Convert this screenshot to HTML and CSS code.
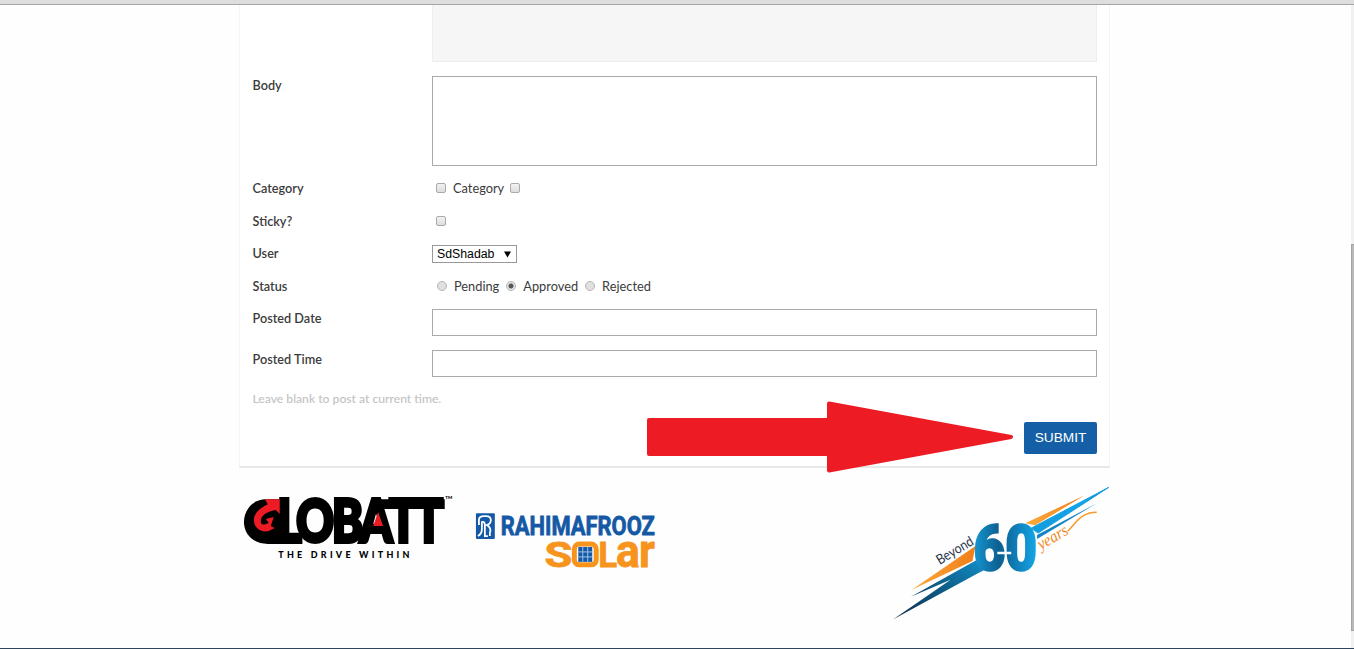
FILE: index.html
```html
<!DOCTYPE html>
<html lang="en">
<head>
<meta charset="utf-8">
<title>Post</title>
<link rel="stylesheet" href="styles.css">
</head>
<body>
<div class="topbar"></div>
<main class="page">
  <form class="card">
    <div class="row row-preview"><span></span><div class="preview"></div></div>
    <div class="row row-body"><label class="label">Body</label><textarea class="area"></textarea></div>
    <div class="row row-category"><span class="label">Category</span>
      <div class="options"><i class="check"></i><span class="opt">Category</span><i class="check last"></i></div></div>
    <div class="row row-sticky"><span class="label">Sticky?</span><div class="options"><i class="check"></i></div></div>
    <div class="row row-user"><span class="label">User</span><div class="select"><span>SdShadab</span>
      <svg width="7" height="7" viewBox="0 0 7 7"><path d="M0 .5h7L3.500 6.500z"/></svg></div></div>
    <div class="row row-status"><span class="label">Status</span>
      <div class="options"><i class="radio"></i><span class="opt pending">Pending</span><i class="radio on"></i><span class="opt approved">Approved</span><i class="radio"></i><span class="opt">Rejected</span></div></div>
    <div class="row row-input"><label class="label">Posted Date</label><input class="field"></div>
    <div class="row row-input"><label class="label">Posted Time</label><input class="field"></div>
    <div class="hint">Leave blank to post at current time.</div>
    <div class="actions"><button type="button" class="submit">SUBMIT</button></div>
    <svg class="arrow" width="368" height="74" viewBox="0 0 368 74"><path d="M3 20H183V3.500L365 37 183 70.500V54H3z" fill="#ed1c24" stroke="#ed1c24" stroke-width="4" stroke-linejoin="round"/></svg>
  </form>
  <footer class="logos">
    <svg class="globatt" width="225" height="85" viewBox="0 0 225 85">
      <text class="heavy" transform="scale(.8 1)" x="53 77 122 157 194 226" y="57.500" font-size="58.500" stroke="#000" stroke-width="4">LOBATT</text>
      <path d="M31 14h16v45H33C18 59 9 49 9 37S18 14 31 14z"/>
      <path d="M30 14h15v15l-4-4C31 27 26 31 26 36q0 5 5 3l3-1-3-4 8-2-3 9 4 2-6 3c-8 2-15-3-15-11 0-7 6-12 14-16z" fill="#ed1c24"/>
      <path d="M144 27l5 14h-10z" fill="#ed1c24"/>
      <path d="M137 14h74v10h-74z"/>
      <text class="bold" x="43.500" y="73.500" font-size="9" textLength="132">THE DRIVE WITHIN</text>
      <text class="bold" x="211.500" y="13.500" font-size="4.500">TM</text>
    </svg>
    <svg class="solar" width="200" height="70" viewBox="0 0 200 70">
      <rect x="11" y="8" width="19" height="26" rx="1" fill="#1559a6"/>
      <path d="M14 20v-5q0-4 5-4h2q5 0 5 4 0 4-4 5 5 3 3 8v3M13 31q4-2 4-7v-7q3-1 3 3v11h3" fill="none" stroke="#fff" stroke-width="1.800"/>
      <text class="square" x="36" y="30" font-size="26" textLength="155" lengthAdjust="spacingAndGlyphs" fill="#1559a6" stroke="#1559a6">RAHIMAFROOZ</text>
      <g class="square" fill="#f7941e" stroke="#f7941e">
        <text x="80" y="62" font-size="36" textLength="28" lengthAdjust="spacingAndGlyphs">S</text>
        <text x="134" y="62" font-size="36" textLength="19" lengthAdjust="spacingAndGlyphs">L</text>
        <text x="152" y="62" font-size="47" textLength="24" lengthAdjust="spacingAndGlyphs">a</text>
        <text x="175" y="62" font-size="47" textLength="16" lengthAdjust="spacingAndGlyphs">r</text>
      </g>
      <rect x="110" y="39" width="22" height="21" rx="5" fill="#fff" stroke="#f7941e" stroke-width="5"/>
      <rect x="114" y="42" width="14" height="15" fill="#1559a6"/>
      <path d="M118.500 42v15M123.500 42v15M114 47h14M114 52h14" stroke="#9cc4ea" stroke-width="1"/>
    </svg>
    <svg class="sixty" width="235" height="145" viewBox="0 0 235 145">
      <defs>
        <linearGradient id="tail" x1="0" y1="1" x2="1" y2="0"><stop offset="0" stop-color="#10294d"/><stop offset=".5" stop-color="#0d5c86"/><stop offset="1" stop-color="#1394cf"/></linearGradient>
        <linearGradient id="beam"><stop offset="0" stop-color="#139bdc"/><stop offset=".7" stop-color="#13a5ea"/><stop offset="1" stop-color="#1f4b80"/></linearGradient>
        <linearGradient id="digits"><stop offset="0" stop-color="#1598d3"/><stop offset=".4" stop-color="#0e5f90"/><stop offset=".55" stop-color="#0e6fa4"/><stop offset="1" stop-color="#14a7e9"/></linearGradient>
        <linearGradient id="gold"><stop offset="0" stop-color="#fbaa3c"/><stop offset="1" stop-color="#f07f18"/></linearGradient>
      </defs>
      <path d="M27 110L91 66 88 81z" fill="url(#gold)"/>
      <path d="M26 117L94 79 108 86 94 93 8 140 66 100z" fill="url(#tail)"/>
      <path d="M141 43L201 15 151 45z" fill="url(#gold)"/>
      <path d="M147 48L225 7 154 53z" fill="url(#beam)" stroke="#13a0e2" stroke-width="1"/>
      <path d="M153 55L213 23 153 59z" fill="#1584c5"/>
      <text class="digits" x="89" y="90" font-size="63" textLength="64" lengthAdjust="spacingAndGlyphs" fill="url(#digits)" stroke="url(#digits)" stroke-width="2.500">60</text>
      <path d="M113 73h14" stroke="#fff" stroke-width="2.500"/>
      <text class="beyond" transform="translate(55 85) rotate(-31)" font-size="14" textLength="41" lengthAdjust="spacingAndGlyphs">Beyond</text>
      <text class="years" transform="translate(157 70) rotate(-30)" font-size="17" textLength="33" lengthAdjust="spacingAndGlyphs">years</text>
      <path d="M184 51C192 43 197 32 213 32" fill="none" stroke="#f59a2c" stroke-width="1.500"/>
    </svg>
  </footer>
</main>
<div class="scrollbar"><div class="thumb"></div></div>
<div class="taskbar"></div>
</body>
</html>
```
FILE: styles.css
```css
* { box-sizing: border-box; }
body {
  margin: 0;
  height: 649px;
  overflow: hidden;
  background: #fefefe;
  color: #3c3c3c;
  font: 13px/18px Lato, sans-serif;
  display: grid;
  grid-template: 5px 643px 1px / 1351px 3px;
}
.topbar { grid-column: 1 / 3; background: #dedede; border-bottom: 1px solid #a5a5a5; }
.taskbar { grid-column: 1 / 3; background: #30445c; }
.page { padding-left: 239px; }
.card {
  position: relative;
  width: 871px;
  height: 463px;
  padding: 0 13px;
  background: #fff;
  border: 1px solid #f5f5f5;
  border-top: 0;
  border-bottom: 2px solid #e8e8e8;
}
.row { display: grid; grid-template-columns: 180px 665px; align-items: start; margin-left: -1px; }
.row-preview { height: 71px; }
.row-body { height: 103px; }
.row-category { height: 33px; }
.row-sticky { height: 32px; }
.row-user { height: 33px; }
.row-status { height: 32px; }
.row-input { height: 41px; }
.preview { height: 57px; background: #f6f6f6; border: 1px solid #eee; border-top: 0; }
.label { font-weight: 600; font-size: 12.7px; padding-left: .5px; }
.area, .field { width: 665px; border: 1px solid #aaa; background: #fff; margin: 0; padding: 4px; resize: none; }
.area { height: 90px; }
.field { height: 27px; }
.options { display: flex; align-items: center; height: 17px; padding-left: 4px; }
.opt { font-size: 12.8px; font-weight: 400; }
.check { width: 10px; height: 10px; border: 1px solid #aaa; border-radius: 2px; background: linear-gradient(#f2f2f2, #ddd); margin-right: 7px; }
.last { margin-left: 6px; }
.radio { width: 10px; height: 10px; border: 1px solid #b5b5b5; border-radius: 50%; background: #e0e0e0; margin: 0 7px 0 1px; }
.on { background: radial-gradient(circle, #555 0 2px, #e5e5e5 3px); }
.pending, .approved { margin-right: 6px; }
.select { width: 85px; height: 18px; margin-top: 1px; border: 1px solid #999; background: #fff; color: #000; display: flex; align-items: center; justify-content: space-between; padding: 0 5px 0 4px; font: 12.3px/16px "Liberation Sans", sans-serif; }
.hint { height: 31px; line-height: 16px; font-size: 12.15px; font-weight: 500; color: #c2c2c2; margin-left: -.5px; }
.actions { display: flex; justify-content: flex-end; margin-right: -1px; }
.submit { width: 73px; height: 32px; border: 0; border-radius: 2px; background: #155fa6; color: #fff; padding: 0 0 2px; font: 13.7px "Liberation Sans", sans-serif; }
.arrow { position: absolute; left: 406px; top: 395px; }
.logos { display: flex; align-items: flex-start; width: 884px; padding-top: 12px; margin-left: -4px; }
.globatt { margin-top: 5px; }
.solar { margin: 25px 0 0 6px; }
.sixty { margin-left: 222px; }
.heavy, .bold { font-family: Lato, sans-serif; font-weight: 900; }
.digits { font-family: Roboto, sans-serif; font-weight: 800; }
.square { font-family: Roboto, sans-serif; font-weight: 700; stroke-width: .8px; }
.beyond { font-family: Lato, sans-serif; fill: #28354c; }
.years { font-family: "Liberation Serif", serif; font-style: italic; fill: #ef8b23; }
.scrollbar { background: #f1f1f1; padding-top: 239px; }
.thumb { height: 387px; background: #b9b9b9; border: 1px solid #a4a4a4; border-right: 0; }
```
